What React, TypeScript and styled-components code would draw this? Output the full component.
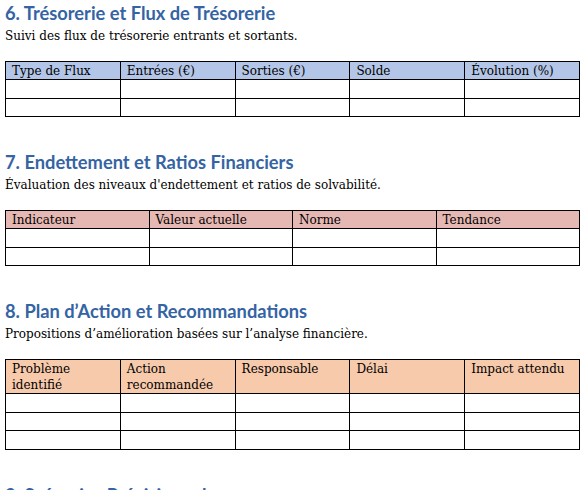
import React from "react";
import styled, { createGlobalStyle } from "styled-components";

const Global = createGlobalStyle`
  html, body { margin: 0; padding: 0; background: #fff; }
  body { width: 587px; height: 490px; overflow: hidden; }
`;

const Page = styled.div`
  padding: 2px 7px 0 5px;
  display: flex;
  flex-direction: column;
`;

const Section = styled.section`
  display: flex;
  flex-direction: column;
  margin-bottom: 34px;
`;

const Heading = styled.h2`
  margin: 0;
  font-family: "Lato", "Open Sans", sans-serif;
  font-weight: 700;
  font-size: 18.3px;
  line-height: 22px;
  color: #3464a3;
  white-space: nowrap;
`;

const Desc = styled.p`
  margin: 4px 0 17px;
  font-family: "DejaVu Serif", serif;
  font-size: 12px;
  line-height: 16px;
  color: #000;
`;

const Table = styled.table`
  width: 575px;
  border-collapse: collapse;
  table-layout: fixed;
  font-family: "DejaVu Serif", serif;
  font-size: 12px;
`;

const HeadCell = styled.th<{ $bg: string }>`
  background: ${(p) => p.$bg};
  border: 1px solid #000;
  text-align: left;
  vertical-align: top;
  font-weight: 400;
  padding: 1px 6px 0;
  line-height: 16px;
  height: 15px;
  color: #000;
`;

const Cell = styled.td`
  border: 1px solid #000;
  height: 17.5px;
  padding: 0;
`;

type Block = {
  title: string;
  desc: string;
  bg: string;
  cols: string[];
  rows: number;
};

const blocks: Block[] = [
  {
    title: "6. Trésorerie et Flux de Trésorerie",
    desc: "Suivi des flux de trésorerie entrants et sortants.",
    bg: "#b4c6e7",
    cols: ["Type de Flux", "Entrées (€)", "Sorties (€)", "Solde", "Évolution (%)"],
    rows: 2,
  },
  {
    title: "7. Endettement et Ratios Financiers",
    desc: "Évaluation des niveaux d'endettement et ratios de solvabilité.",
    bg: "#e6b8b3",
    cols: ["Indicateur", "Valeur actuelle", "Norme", "Tendance"],
    rows: 2,
  },
  {
    title: "8. Plan d’Action et Recommandations",
    desc: "Propositions d’amélioration basées sur l’analyse financière.",
    bg: "#f7caac",
    cols: ["Problème identifié", "Action recommandée", "Responsable", "Délai", "Impact attendu"],
    rows: 3,
  },
];

export default function App() {
  return (
    <>
      <Global />
      <Page>
        {blocks.map((b) => (
          <Section key={b.title}>
            <Heading>{b.title}</Heading>
            <Desc>{b.desc}</Desc>
            <Table>
              <thead>
                <tr>
                  {b.cols.map((c) => (
                    <HeadCell key={c} $bg={b.bg}>{c}</HeadCell>
                  ))}
                </tr>
              </thead>
              <tbody>
                {Array.from({ length: b.rows }).map((_, i) => (
                  <tr key={i}>
                    {b.cols.map((c) => (
                      <Cell key={c} />
                    ))}
                  </tr>
                ))}
              </tbody>
            </Table>
          </Section>
        ))}
        <Heading>9. Scénarios Prévisionnels</Heading>
      </Page>
    </>
  );
}
